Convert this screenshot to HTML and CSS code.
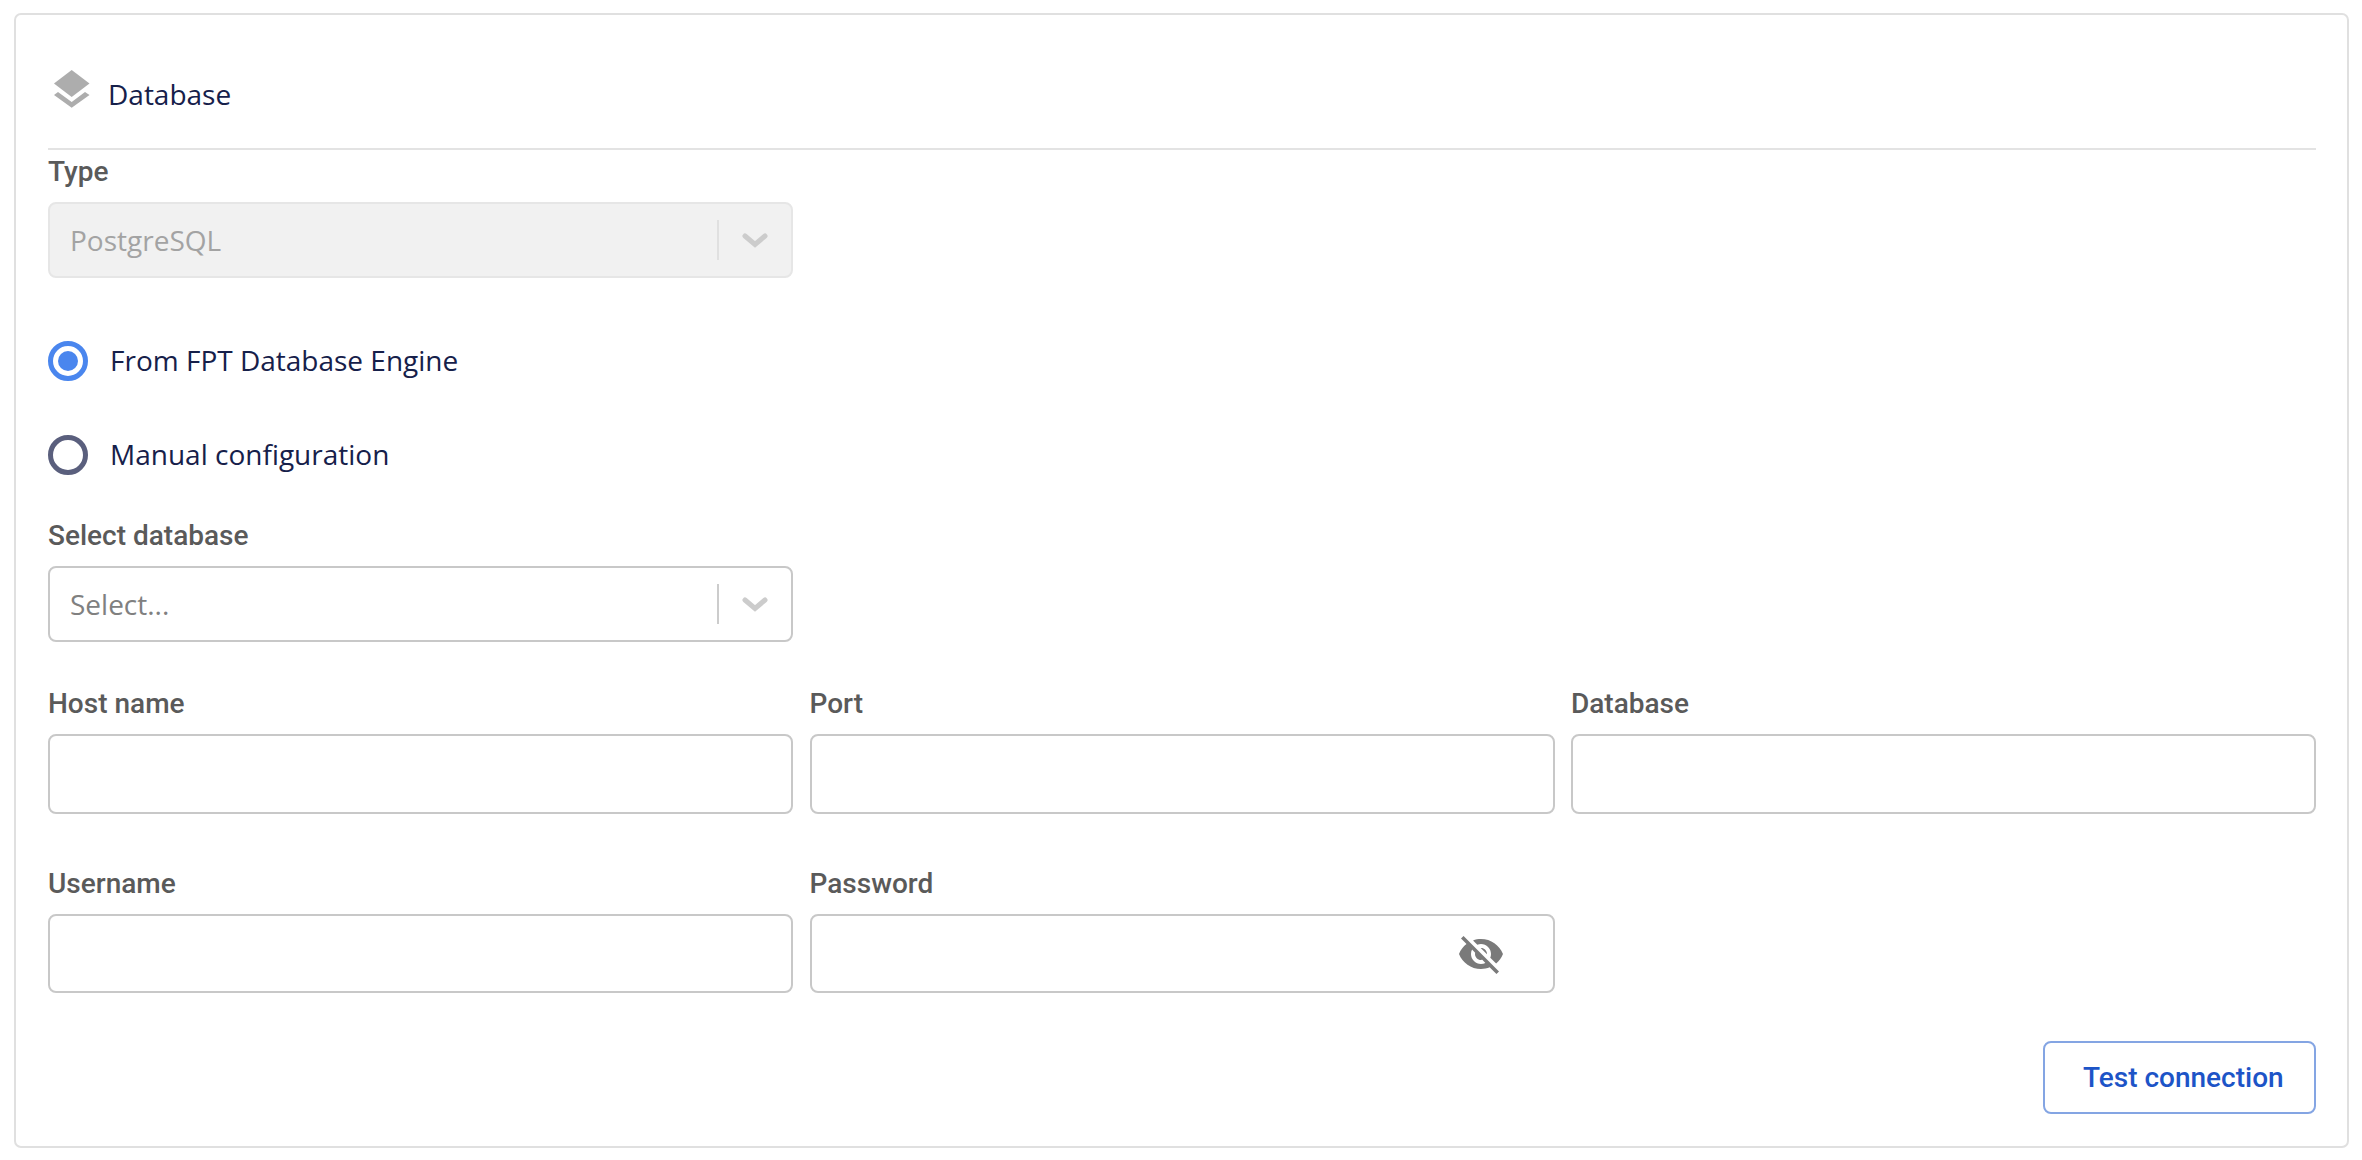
FILE: index.html
```html
<!DOCTYPE html>
<html lang="en">
<head>
<meta charset="utf-8">
<title>Database</title>
<link rel="stylesheet" href="styles.css">
</head>
<body>
<section class="card">
  <header class="card-head">
    <svg class="layers-icon" width="36" height="38" viewBox="0 0 36 38" aria-hidden="true">
      <path class="icon-fill" d="M17.7 0 35.500 13.500 17.700 27 0 13.500Z"/>
      <path class="icon-fill" d="M0 25 4 22 17.700 32 31 22 35.500 25 17.700 37.700Z"/>
    </svg>
    <span class="card-title">Database</span>
  </header>

  <div class="grid">
    <div class="field">
      <label class="label">Type</label>
      <div class="select select-disabled">
        <span class="select-value">PostgreSQL</span>
        <span class="select-sep"></span>
        <svg class="chevron" width="26" height="15" viewBox="0 0 26 15" aria-hidden="true"><path d="M3 3 13 11.500 23 3"/></svg>
      </div>
    </div>
  </div>

  <div class="radios">
    <label class="radio-row">
      <span class="radio radio-on"><span class="radio-dot"></span></span>
      <span class="radio-text">From FPT Database Engine</span>
    </label>
    <label class="radio-row">
      <span class="radio"></span>
      <span class="radio-text">Manual configuration</span>
    </label>
  </div>

  <div class="grid grid-db">
    <div class="field">
      <label class="label">Select database</label>
      <div class="select">
        <span class="select-value">Select...</span>
        <span class="select-sep"></span>
        <svg class="chevron" width="26" height="15" viewBox="0 0 26 15" aria-hidden="true"><path d="M3 3 13 11.500 23 3"/></svg>
      </div>
    </div>
  </div>

  <div class="grid grid-conn">
    <div class="field"><label class="label">Host name</label><div class="input"></div></div>
    <div class="field"><label class="label">Port</label><div class="input"></div></div>
    <div class="field"><label class="label">Database</label><div class="input"></div></div>
  </div>

  <div class="grid grid-cred">
    <div class="field"><label class="label">Username</label><div class="input input-cred"></div></div>
    <div class="field">
      <label class="label">Password</label>
      <div class="input input-cred input-password">
        <svg class="eye-icon" width="48" height="48" viewBox="0 0 24 24" aria-hidden="true"><path d="M12 7c2.76 0 5 2.24 5 5 0 .65-.13 1.26-.36 1.83l2.92 2.92c1.51-1.26 2.7-2.89 3.43-4.75-1.73-4.39-6-7.500-11-7.500-1.400 0-2.740.25-3.980.7l2.160 2.160C10.740 7.130 11.350 7 12 7zM2 4.270l2.280 2.280.46.46C3.080 8.300 1.780 10.020 1 12c1.730 4.390 6 7.500 11 7.500 1.550 0 3.030-.3 4.380-.84l.42.42L19.730 22 21 20.730 3.270 3 2 4.270zM7.530 9.800l1.550 1.550c-.05.21-.08.43-.08.65 0 1.660 1.340 3 3 3 .22 0 .44-.03.65-.08l1.550 1.550c-.67.33-1.410.53-2.200.53-2.760 0-5-2.240-5-5 0-.79.2-1.530.53-2.200zm4.310-.78l3.150 3.150.02-.16c0-1.660-1.340-3-3-3l-.17.01z"/></svg>
      </div>
    </div>
  </div>

  <div class="actions">
    <button class="btn-outline" type="button">Test connection</button>
  </div>
</section>
</body>
</html>
```

FILE: styles.css
```css
* { box-sizing: border-box; }

html, body { margin: 0; background: #fff; }

body { padding: 13px 13px 12px 14px; }

.card {
  height: 1135px;
  padding: 0 31px 0 32px;
  border: 2px solid #e0e0e0;
  border-radius: 7px;
  background: #fff;
}

.card-head {
  display: flex;
  align-items: flex-start;
  height: 135px;
  padding-top: 55px;
  border-bottom: 2px solid #e3e3e3;
}

.layers-icon { margin-left: 6px; flex: none; }
.icon-fill { fill: #adadad; }

.card-title {
  margin-left: 18px;
  margin-top: 5px;
  font: 400 28px/38px "Open Sans", sans-serif;
  color: #16204a;
}

.grid {
  display: grid;
  grid-template-columns: repeat(3, 1fr);
  gap: 16.5px;
}

.grid-db { margin-top: 43px; }
.grid-conn { margin-top: 44px; }
.grid-cred { margin-top: 52px; }

.card-head + .grid { margin-top: 4px; }

.label {
  display: block;
  height: 36px;
  margin-bottom: 12px;
  font: 500 28px/36px Roboto, sans-serif;
  color: #5a5a5a;
}

.select {
  display: flex;
  align-items: center;
  height: 76px;
  padding: 0 23px 0 20px;
  border: 2px solid #c8c8c8;
  border-radius: 8px;
  background: #fff;
}

.select-disabled {
  background: #f1f1f1;
  border-color: #e6e6e6;
}

.select-value {
  flex: 1;
  font: 400 28px/38px "Open Sans", sans-serif;
  color: #808080;
}

.select-disabled .select-value { color: #a3a3a3; }

.select-sep {
  width: 2px;
  height: 40px;
  margin-right: 23px;
  background: #ccc;
}

.select-disabled .select-sep { background: #e0e0e0; }

.chevron { flex: none; fill: none; stroke: #ccc; stroke-width: 5; stroke-linecap: round; }

.radios {
  display: flex;
  flex-direction: column;
  gap: 54px;
  margin-top: 63px;
}

.radio-row {
  display: flex;
  align-items: center;
  gap: 22px;
  height: 40px;
}

.radio {
  display: flex;
  align-items: center;
  justify-content: center;
  width: 40px;
  height: 40px;
  border: 5px solid #5a5f7d;
  border-radius: 50%;
}

.radio-on { border-color: #4a86ee; }

.radio-dot {
  width: 20px;
  height: 20px;
  border-radius: 50%;
  background: #4a86ee;
}

.radio-text {
  padding-bottom: 2px;
  font: 400 28px/38px "Open Sans", sans-serif;
  color: #16204a;
}

.input {
  display: flex;
  align-items: center;
  justify-content: flex-end;
  height: 80px;
  border: 2px solid #c8c8c8;
  border-radius: 8px;
  background: #fff;
}

.input-cred { height: 79px; margin-top: 2px; }
.input-password { padding-right: 48px; }

.eye-icon { fill: #7a7a7a; }

.actions {
  display: flex;
  justify-content: flex-end;
  margin-top: 48px;
}

.btn-outline {
  width: 273px;
  height: 73px;
  padding: 0 10px 0 38px;
  border: 2px solid #84a5e3;
  border-radius: 8px;
  background: #fff;
  font: 500 28px/36px Roboto, sans-serif;
  color: #1d54c7;
  white-space: nowrap;
  text-align: left;
}
```
